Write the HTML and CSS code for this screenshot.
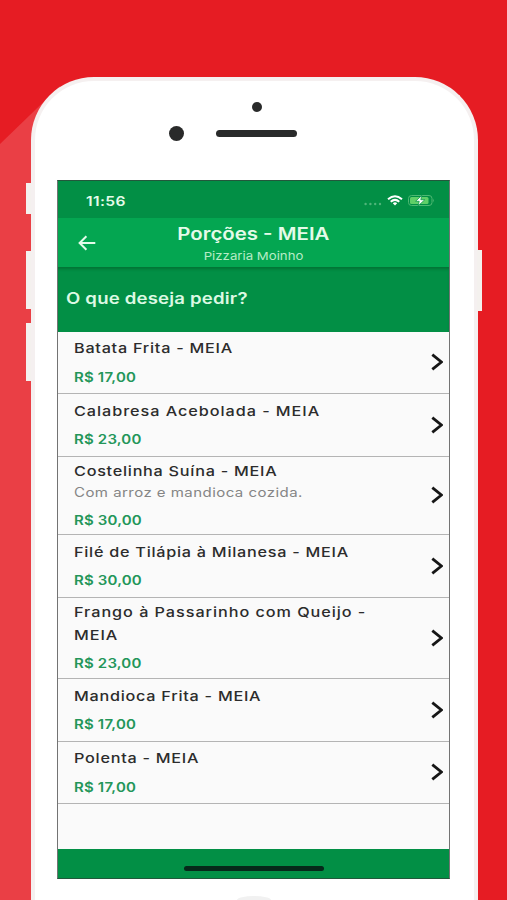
FILE: index.html
```html
<!DOCTYPE html>
<html lang="pt-BR">
<head>
    <meta charset="UTF-8">
    <meta name="viewport" content="width=device-width, initial-scale=1.0">
    <title>Pizzaria Moinho</title>
    <link rel="stylesheet" href="styles.css">
</head>
<body>
    <div class="phone">
        <span class="side-button mute"></span>
        <span class="side-button volume-up"></span>
        <span class="side-button volume-down"></span>
        <span class="side-button power"></span>

        <div class="phone-top">
            <span class="camera"></span>
            <div class="speaker-row">
                <span class="sensor"></span>
                <span class="speaker"></span>
            </div>
        </div>

        <div class="screen">
            <div class="status-bar">
                <span class="time wide">11:56</span>
                <div class="status-icons">
                    <svg class="signal" width="18" height="4" viewBox="0 0 18 4" fill="#4fb57a">
                        <circle cx="1.6" cy="2" r="1.2"/><circle cx="6.4" cy="2" r="1.2"/><circle cx="11.2" cy="2" r="1.2"/><circle cx="16" cy="2" r="1.2"/>
                    </svg>
                    <svg class="wifi" width="16" height="11" viewBox="0 0 16 11" fill="none" stroke="#fff" stroke-width="2">
                        <path d="M1 4.2Q8-1.8 15 4.2"/>
                        <path d="M3.7 6.7Q8 3 12.3 6.7"/>
                        <path d="M5.8 8.2Q8 6.4 10.2 8.2L8 10.4Z" fill="#fff" stroke="none"/>
                    </svg>
                    <svg class="battery" width="27" height="11" viewBox="0 0 27 11">
                        <rect x=".5" y=".5" width="23.5" height="10" rx="3" fill="none" stroke="#4fb873"/>
                        <rect x="2" y="2" width="18.5" height="7" rx="1.5" fill="#5fd068"/>
                        <path d="M25 3.6Q26.6 5.5 25 7.4Z" fill="#4fb873"/>
                        <path d="M13.8.4L7.6 6.3H11.2L10.2 10.8L16.8 4.7H12.8Z" fill="#fff" stroke="#028f45" stroke-width=".7"/>
                    </svg>
                </div>
            </div>

            <header class="app-bar">
                <svg class="back" width="18" height="16" viewBox="0 0 18 16" fill="none" stroke="#e4fbe9" stroke-width="2">
                    <path d="M17.3 8H2M8.4 1.3L1.6 8L8.4 14.7"/>
                </svg>
                <div class="titles">
                    <h1 class="wide">Porções - MEIA</h1>
                    <p class="wide">Pizzaria Moinho</p>
                </div>
            </header>

            <div class="prompt"><h2 class="wide">O que deseja pedir?</h2></div>

            <ul class="menu">
                <li>
                    <div class="item">
                        <span class="name wide">Batata Frita - MEIA</span>
                        <span class="price wide">R$ 17,00</span>
                    </div>
                    <svg class="chevron" viewBox="0 0 12 18"><path d="M1.3 1.6L10.4 9L1.3 16.4"/></svg>
                </li>
                <li>
                    <div class="item">
                        <span class="name loose wide">Calabresa Acebolada - MEIA</span>
                        <span class="price wide">R$ 23,00</span>
                    </div>
                    <svg class="chevron" viewBox="0 0 12 18"><path d="M1.3 1.6L10.4 9L1.3 16.4"/></svg>
                </li>
                <li class="with-description">
                    <div class="item">
                        <span class="name wide">Costelinha Suína - MEIA</span>
                        <span class="description wide">Com arroz e mandioca cozida.</span>
                        <span class="price wide">R$ 30,00</span>
                    </div>
                    <svg class="chevron" viewBox="0 0 12 18"><path d="M1.3 1.6L10.4 9L1.3 16.4"/></svg>
                </li>
                <li>
                    <div class="item">
                        <span class="name wide">Filé de Tilápia à Milanesa - MEIA</span>
                        <span class="price wide">R$ 30,00</span>
                    </div>
                    <svg class="chevron" viewBox="0 0 12 18"><path d="M1.3 1.6L10.4 9L1.3 16.4"/></svg>
                </li>
                <li class="two-lines">
                    <div class="item">
                        <span class="name loose wide">Frango à Passarinho com Queijo -<br>MEIA</span>
                        <span class="price wide">R$ 23,00</span>
                    </div>
                    <svg class="chevron" viewBox="0 0 12 18"><path d="M1.3 1.6L10.4 9L1.3 16.4"/></svg>
                </li>
                <li>
                    <div class="item">
                        <span class="name wide">Mandioca Frita - MEIA</span>
                        <span class="price wide">R$ 17,00</span>
                    </div>
                    <svg class="chevron" viewBox="0 0 12 18"><path d="M1.3 1.6L10.4 9L1.3 16.4"/></svg>
                </li>
                <li>
                    <div class="item">
                        <span class="name wide">Polenta - MEIA</span>
                        <span class="price wide">R$ 17,00</span>
                    </div>
                    <svg class="chevron" viewBox="0 0 12 18"><path d="M1.3 1.6L10.4 9L1.3 16.4"/></svg>
                </li>
            </ul>

            <div class="bottom-bar"><span class="home-indicator"></span></div>
        </div>

        <span class="home-button"></span>
    </div>
</body>
</html>
```

FILE: styles.css
```css
* {
    box-sizing: border-box;
}
body {
    margin: 0;
    height: 900px;
    overflow: hidden;
    padding: 77px 29px 0 31px;
    background-color: #e61c23;
    font-family: Inter, "Open Sans", sans-serif;
}
/* diagonal light behind the phone */
body::before {
    content: "";
    position: absolute;
    left: 0;
    top: 0;
    width: 60px;
    height: 900px;
    background-color: #ea3f45;
    clip-path: polygon(0 144px, 60px 86px, 60px 100%, 0 100%);
}
h1, h2, p, ul {
    margin: 0;
    padding: 0;
}
/* the text is drawn wider than the font's own proportions */
.wide {
    display: block;
    white-space: nowrap;
    transform: scaleX(1.2);
    transform-origin: left center;
}
.phone {
    position: relative;
    height: 823px;
    border: 4px solid #f5f0f0;
    border-bottom: none;
    border-radius: 63px 63px 0 0;
    background-color: #fff;
    padding: 0 24px 0 22px;
}
.side-button {
    position: absolute;
    width: 5px;
    background-color: #f4f1ee;
}
.mute {
    left: -9px;
    top: 102px;
    height: 31px;
}
.volume-up {
    left: -9px;
    top: 170px;
    height: 58px;
}
.volume-down {
    left: -9px;
    top: 242px;
    height: 58px;
}
.power {
    right: -8px;
    top: 169px;
    height: 61px;
}
.phone-top {
    height: 99px;
    display: flex;
    flex-direction: column;
    padding-top: 21px;
}
.camera {
    width: 10px;
    height: 10px;
    border-radius: 50%;
    background-color: #292a2a;
    margin-left: 195px;
}
.speaker-row {
    display: flex;
    align-items: center;
    gap: 32px;
    margin: 14px 0 0 112px;
}
.sensor {
    width: 15px;
    height: 15px;
    border-radius: 50%;
    background-color: #292a2a;
}
.speaker {
    width: 81px;
    height: 7px;
    border-radius: 4px;
    background-color: #292a2a;
}
.screen {
    height: 699px;
    border: 1px solid #3d554a;
    border-color: #23573c #737373 #23573c #737373;
    background-color: #fafafa;
    display: flex;
    flex-direction: column;
}
.status-bar {
    height: 37px;
    background-color: #028f45;
    display: flex;
    justify-content: space-between;
    align-items: center;
    padding: 2px 14px 0 28px;
}
.time {
    font-size: 13px;
    font-weight: 600;
    letter-spacing: 0.3px;
    color: #e4fbe9;
}
.status-icons {
    display: flex;
    align-items: center;
    gap: 5px;
}
.signal {
    margin-top: 7px;
}
.app-bar {
    height: 49px;
    background-color: #04a651;
    display: flex;
    align-items: center;
    padding-left: 20px;
}
.titles {
    flex: 1;
    margin-right: 38px;
    display: flex;
    flex-direction: column;
    align-items: center;
    color: #e4fbe9;
}
.titles .wide {
    transform-origin: center;
}
.titles h1 {
    font-size: 17px;
    line-height: 24px;
    margin-top: 2px;
    font-weight: 600;
}
.titles p {
    font-size: 11px;
    line-height: 20px;
    color: #b5ecc6;
}
.prompt {
    height: 64.5px;
    background-color: #028f45;
    box-shadow: inset 0 3px 3px -1px rgba(0, 60, 20, 0.35);
    padding: 21px 8px 0;
}
.prompt h2 {
    font-size: 15.5px;
    line-height: 22px;
    font-weight: 600;
    letter-spacing: 0.15px;
    color: #dcf9e3;
}
.menu {
    flex: 1;
    list-style: none;
}
.menu li {
    height: 62.6px;
    border-bottom: 1px solid #b4b4b4;
    padding: 0 6px 0 16px;
    display: flex;
    justify-content: space-between;
    align-items: center;
}
.menu li.with-description {
    height: 78.4px;
}
.menu li.two-lines {
    height: 81.4px;
}
.item {
    display: flex;
    flex-direction: column;
    align-items: flex-start;
}
.name {
    font-size: 13.5px;
    line-height: 22.5px;
    font-weight: 500;
    letter-spacing: 0.62px;
    color: #2c2c2c;
}
.name.loose {
    letter-spacing: 0.8px;
}
.price {
    font-size: 12.5px;
    line-height: 20px;
    margin-top: 8px;
    font-weight: 600;
    letter-spacing: 0.15px;
    color: #239659;
}
.description {
    font-size: 12.5px;
    line-height: 20px;
    letter-spacing: 0.38px;
    color: #858585;
}
.chevron {
    width: 12px;
    height: 18px;
    fill: none;
    stroke: #161616;
    stroke-width: 2.8;
}
.bottom-bar {
    height: 29px;
    background-color: #028f45;
    display: flex;
    justify-content: center;
    padding-top: 17px;
}
.home-indicator {
    width: 140px;
    height: 5px;
    border-radius: 3px;
    background-color: #06291a;
}
/* only the upper edge of the button is in view */
.home-button {
    display: block;
    width: 34px;
    height: 4px;
    margin: 17px auto 0;
    border-radius: 50% 50% 0 0 / 100% 100% 0 0;
    background-color: #f1f1f1;
}
```
